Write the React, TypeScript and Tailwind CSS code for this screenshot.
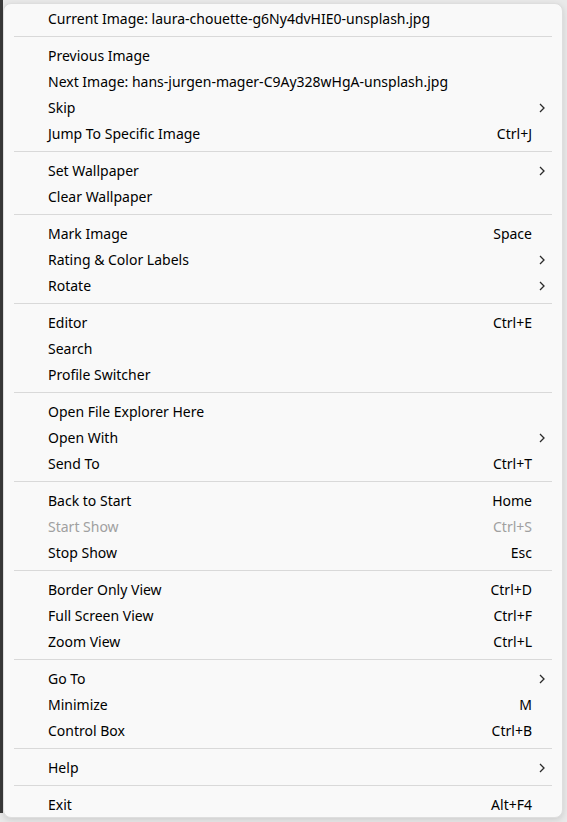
type Item = { label: string; shortcut?: string; sub?: boolean; disabled?: boolean };

// groups are split by a separator line
const groups: Item[][] = [
  [{ label: 'Current Image: laura-chouette-g6Ny4dvHIE0-unsplash.jpg' }],
  [
    { label: 'Previous Image' },
    { label: 'Next Image: hans-jurgen-mager-C9Ay328wHgA-unsplash.jpg' },
    { label: 'Skip', sub: true },
    { label: 'Jump To Specific Image', shortcut: 'Ctrl+J' },
  ],
  [{ label: 'Set Wallpaper', sub: true }, { label: 'Clear Wallpaper' }],
  [
    { label: 'Mark Image', shortcut: 'Space' },
    { label: 'Rating & Color Labels', sub: true },
    { label: 'Rotate', sub: true },
  ],
  [{ label: 'Editor', shortcut: 'Ctrl+E' }, { label: 'Search' }, { label: 'Profile Switcher' }],
  [
    { label: 'Open File Explorer Here' },
    { label: 'Open With', sub: true },
    { label: 'Send To', shortcut: 'Ctrl+T' },
  ],
  [
    { label: 'Back to Start', shortcut: 'Home' },
    { label: 'Start Show', shortcut: 'Ctrl+S', disabled: true },
    { label: 'Stop Show', shortcut: 'Esc' },
  ],
  [
    { label: 'Border Only View', shortcut: 'Ctrl+D' },
    { label: 'Full Screen View', shortcut: 'Ctrl+F' },
    { label: 'Zoom View', shortcut: 'Ctrl+L' },
  ],
  [
    { label: 'Go To', sub: true },
    { label: 'Minimize', shortcut: 'M' },
    { label: 'Control Box', shortcut: 'Ctrl+B' },
  ],
  [{ label: 'Help', sub: true }],
  [{ label: 'Exit', shortcut: 'Alt+F4' }],
];

const Chevron = () => (
  <svg width="6" height="10" viewBox="0 0 6 10" className="-mr-[13px]" fill="none">
    <path d="M1 1l4 4-4 4" stroke="#2b2b2b" strokeWidth="1.3" />
  </svg>
);

const MenuRow = ({ item }: { item: Item }) => (
  <div
    className={`flex items-center h-[26px] pt-[2px] pl-[44px] pr-[30px] ${
      item.disabled ? 'text-[#a0a0a0]' : 'text-[#000000]'
    }`}
  >
    <span className="flex-1 whitespace-nowrap">{item.label}</span>
    {item.shortcut && <span className="whitespace-nowrap">{item.shortcut}</span>}
    {item.sub && <Chevron />}
  </div>
);

export default function App() {
  return (
    <div
      className="flex w-[567px] h-[822px] bg-[#e9e9e9] overflow-hidden text-[14px] leading-none"
      style={{ fontFamily: '"Noto Sans", "Segoe UI", sans-serif' }}
    >
      <div className="w-[3px] h-[813px] bg-[#3a3a3a]" />
      <div className="mt-[3px] w-[560px] h-[815px] rounded-[8px] border border-[#dedede] bg-[#f9f9f9] py-px shadow-[0_2px_6px_rgba(0,0,0,0.12)]">
        {groups.map((g, gi) => (
          <div key={gi}>
            {gi > 0 && <div className="mx-[10px] my-[5px] h-px bg-[#d9d9d9]" />}
            {g.map((item) => (
              <MenuRow key={item.label} item={item} />
            ))}
          </div>
        ))}
      </div>
    </div>
  );
}
